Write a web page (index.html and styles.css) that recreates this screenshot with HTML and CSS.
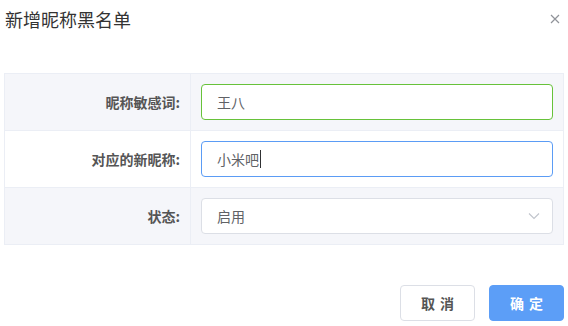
FILE: index.html
```html
<!DOCTYPE html>
<html lang="zh-CN">
<head>
  <meta charset="UTF-8">
  <title>新增昵称黑名单</title>
  <link rel="stylesheet" href="styles.css">
</head>
<body>
  <div class="dialog">
    <div class="dialog-header">
      <span class="dialog-title">新增昵称黑名单</span>
      <button class="dialog-close" aria-label="关闭">
        <svg width="10" height="10" viewBox="0 0 10 10">
          <path d="M1 1 L9 9 M9 1 L1 9" stroke="#909399" stroke-width="1.2" fill="none"/>
        </svg>
      </button>
    </div>

    <table class="form-table">
      <tr class="row-gray">
        <td class="label">昵称敏感词:</td>
        <td class="field"><input class="form-control ok" type="text" value="王八"></td>
      </tr>
      <tr>
        <td class="label">对应的新昵称:</td>
        <td class="field">
          <!-- focused input, drawn with its caret -->
          <div class="form-control focus">小米吧<span class="caret"></span></div>
        </td>
      </tr>
      <tr class="row-gray">
        <td class="label">状态:</td>
        <td class="field">
          <div class="form-control select">
            <span>启用</span>
            <svg width="12" height="8" viewBox="0 0 12 8">
              <path d="M1 1.5 L6 6.5 L11 1.5" stroke="#c0c4cc" stroke-width="1.1" fill="none"/>
            </svg>
          </div>
        </td>
      </tr>
    </table>

    <div class="dialog-footer">
      <button class="btn">取 消</button>
      <button class="btn btn-primary">确 定</button>
    </div>
  </div>
</body>
</html>
```

FILE: styles.css
```css
body {
  margin: 0;
  font-family: "Noto Sans CJK SC", "Noto Sans", sans-serif;
  color: #303133;
  background: #fff;
}
.dialog {
  width: 568px;
}
.dialog-header {
  display: flex;
  justify-content: space-between;
  align-items: center;
  height: 38px;
  padding: 0 8px 0 5px;
}
.dialog-title {
  font-size: 18px;
  color: #333;
  line-height: 24px;
}
.dialog-close {
  border: none;
  background: none;
  padding: 0;
  width: 10px;
  height: 10px;
  display: flex;
}
.form-table {
  margin: 35px 4px 0 4px;
  width: 560px;
  border-collapse: collapse;
  border: 1px solid #ebeef5;
}
.form-table td {
  border: 1px solid #ebeef5;
  height: 56px;
  padding: 0;
}
.row-gray {
  background: #f5f6fa;
}
.label {
  width: 175px;
  padding-right: 10px !important;
  text-align: right;
  font-size: 14px;
  font-weight: bold;
  color: #555;
}
.field {
  padding: 0 10px !important;
}
.form-control {
  box-sizing: border-box;
  width: 352px;
  height: 36px;
  padding: 0 15px;
  border: 1px solid #dcdfe6;
  border-radius: 4px;
  background: #fff;
  font-family: inherit;
  font-size: 14px;
  color: #606266;
  outline: none;
  display: flex;
  align-items: center;
}
.form-control.ok {
  border-color: #67c23a;
}
.form-control.focus {
  border-color: #5b9cf5;
}
.caret {
  display: inline-block;
  width: 1px;
  height: 18px;
  margin-left: 1px;
  background: #303133;
}
.select {
  justify-content: space-between;
  padding-right: 12px;
}
.dialog-footer {
  display: flex;
  justify-content: flex-end;
  gap: 14px;
  padding: 40px 4px 0 0;
}
.btn {
  width: 75px;
  height: 36px;
  border: 1px solid #dcdfe6;
  border-radius: 4px;
  background: #fff;
  font-family: inherit;
  font-size: 14px;
  font-weight: bold;
  letter-spacing: 1px;
  padding: 0 0 0 1px;
  color: #555;
  cursor: pointer;
}
.btn-primary {
  background: #5c9ef7;
  border-color: #5c9ef7;
  color: #fff;
}
```
